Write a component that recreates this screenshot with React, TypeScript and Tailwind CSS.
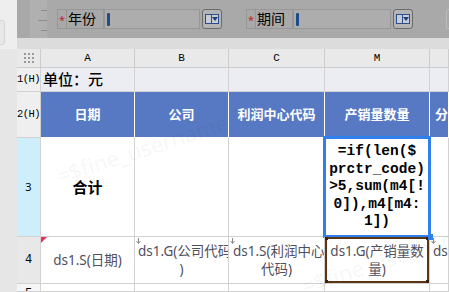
import React from 'react';

const serif = { fontFamily: '"Liberation Mono", "DejaVu Sans Mono", monospace' };
const cjk = { fontFamily: '"Noto Sans", "Noto Sans CJK SC", sans-serif' };

const DropButton: React.FC = () => (
  <div className="w-[20px] h-[20px] ml-[2px] rounded-[3px] border border-[#6b6b6b] bg-[#b4b4b4] flex items-center justify-center">
    <div className="w-[14px] h-[10px] border border-[#2c4f8c] bg-[#c8ccd6] flex">
      <div className="w-1/2 border-r border-[#2c4f8c]" />
      <div className="w-1/2 flex items-center justify-center">
        <div className="w-0 h-0 border-l-[3px] border-r-[3px] border-t-[4px] border-l-transparent border-r-transparent border-t-[#1d3f7a]" />
      </div>
    </div>
  </div>
);

const Field: React.FC<{ label: string; width: number }> = ({ label, width }) => (
  <div className="flex items-center h-[20px] shrink-0" style={cjk}>
    <div className="w-[10px] h-full border border-[#979797] flex items-center justify-center text-[#c0272d] text-[11px] leading-none">*</div>
    <div className="w-[37px] h-full border-y border-r border-[#979797] flex items-center text-[14px] text-black leading-none pl-[1px]">{label}</div>
    <div className="h-full border border-[#979797] bg-[#adadad] flex items-center pl-[2px]" style={{ width }}>
      <div className="w-[3px] h-[13px] rounded-[1px] bg-[#1f4c88]" />
    </div>
    <DropButton />
  </div>
);

const Arrow: React.FC = () => (
  <svg width="5" height="6" viewBox="0 0 5 6" className="absolute left-[1px] top-[1px]">
    <path d="M2.5 0 V5 M0.5 3 L2.5 5.5 L4.5 3" stroke="#8a8a8a" strokeWidth="1" fill="none" />
  </svg>
);

const line = 'border-r border-b border-[#d2d2d2] min-h-0 min-w-0';
const head = 'border-r border-b border-[#cdcdcd] bg-[#e9e9e9] flex items-center justify-center text-[11px] text-black';
const rowHead = `${line} flex items-center justify-center text-[10.5px] tracking-[-0.6px] text-black whitespace-nowrap`;
const blue = 'border-r border-b border-white bg-[#5779c3] flex items-center justify-center text-white text-[13px] font-bold';
const data = `${line} relative overflow-hidden text-[13.5px] leading-[18px] text-[#4f4f5e] text-center whitespace-nowrap flex flex-col justify-center`;

export default function App() {
  return (
    <div className="w-[449px] h-[292px] flex overflow-hidden bg-white">
      <div className="w-[17px] shrink-0 h-full bg-[#e6e6e6] flex flex-col">
        <div className="h-[49px] bg-[#eeeeee] relative">
          <div className="absolute left-[-4px] top-[20px] w-[9px] h-[25px] rounded-[3px] border border-[#d4d4d4] bg-[#e8e8e8]" />
        </div>
      </div>

      <div className="flex-1 min-w-0 h-full flex flex-col relative overflow-hidden">
        <div className="h-[38px] shrink-0 bg-[#a9a9a9] flex items-center">
          <div className="ml-[13px] w-[17px] shrink-0 h-full bg-[#b0b0b0] flex flex-col items-end pt-[10px] gap-[9px]">
            <div className="w-[6px] h-px bg-[#8c8c8c]" />
            <div className="w-[9px] h-px bg-[#8c8c8c]" />
            <div className="w-[6px] h-px bg-[#8c8c8c]" />
          </div>
          <div className="ml-[10px] shrink-0">
            <Field label="年份" width={96} />
          </div>
          <div className="ml-[24px] shrink-0">
            <Field label="期间" width={98} />
          </div>
          <div className="ml-[33px] shrink-0 w-[10px] h-[20px] border border-[#bcbcbc] rounded-[2px]" />
        </div>
        <div className="h-[11px] shrink-0 bg-[#dcdcdc]" />

        <div className="flex-1 min-h-0 overflow-hidden grid grid-cols-[24px_94px_94px_96px_105px_1fr] grid-rows-[19px_24px_46px_99px_47px_minmax(0,1fr)]">
          {/* column header */}
          <div className={head}>
            <div className="grid grid-cols-3 gap-[2px]">
              {Array.from({ length: 9 }).map((_, i) => (
                <div key={i} className="w-[2px] h-[2px] bg-[#9a9a9a]" />
              ))}
            </div>
          </div>
          <div className={head} style={serif}>A</div>
          <div className={head} style={serif}>B</div>
          <div className={head} style={serif}>C</div>
          <div className={`${head} bg-[#cdeefa]`} style={serif}>M</div>
          <div className={head} />

          {/* row 1 */}
          <div className={`${rowHead} bg-[#efefef]`} style={serif}>1(H)</div>
          <div className={`${line} bg-[#ebedf3] flex items-center pl-[2px] text-[15px] font-medium text-black whitespace-nowrap`} style={cjk}>单位：元</div>
          <div className={`${line} bg-[#ebedf3]`} />
          <div className={`${line} bg-[#ebedf3]`} />
          <div className={`${line} bg-[#ebedf3]`} />
          <div className={`${line} bg-[#ebedf3]`} />

          {/* row 2 */}
          <div className={`${rowHead} bg-[#efefef]`} style={serif}>2(H)</div>
          <div className={blue} style={cjk}>日期</div>
          <div className={blue} style={cjk}>公司</div>
          <div className={blue} style={cjk}>利润中心代码</div>
          <div className={blue} style={cjk}>产销量数量</div>
          <div className={`${blue} justify-start pl-[5px] overflow-hidden whitespace-nowrap`} style={cjk}>分组</div>

          {/* row 3 */}
          <div className={`${line} bg-[#cdeefa] flex items-center justify-center text-[11px] text-black`} style={cjk}>3</div>
          <div className={`${line} flex items-center justify-center text-[15px] font-bold text-black`} style={cjk}>合计</div>
          <div className={line} />
          <div className={line} />
          <div className={`${line} relative flex flex-col items-center justify-center text-[14.5px] leading-[17.5px] font-bold text-black`} style={{ fontFamily: '"Liberation Mono", "Noto Sans CJK SC", monospace' }}>
            <div>=if(len($</div>
            <div>prctr_code)</div>
            <div>&gt;5,sum(m4[!</div>
            <div>0]),m4[m4:</div>
            <div>1])</div>
            <div className="absolute left-[-2px] top-[-2px] right-[-2px] bottom-[-2px] border-[3px] border-[#2f80ed]" />
            <div className="absolute right-[-4px] bottom-[-4px] w-[5px] h-[6px] bg-[#2f80ed] z-10" />
          </div>
          <div className={line} />

          {/* row 4 */}
          <div className={`${line} bg-[#e8e8e8] flex items-center justify-center text-[12px] text-black`} style={serif}>4</div>
          <div className={data} style={cjk}>
            <svg width="6" height="6" viewBox="0 0 6 6" className="absolute left-0 top-0">
              <path d="M0 0 H6 L0 6 Z" fill="#e8345c" />
            </svg>
            <div>ds1.S(日期)</div>
          </div>
          <div className={`${data} text-left pl-[3px]`} style={cjk}>
            <Arrow />
            <div>ds1.G(公司代码</div>
            <div className="text-center pr-[3px]">)</div>
          </div>
          <div className={`${data} text-left pl-[4px]`} style={cjk}>
            <Arrow />
            <div>ds1.S(利润中心</div>
            <div className="text-center pr-[4px]">代码)</div>
          </div>
          <div className={data} style={cjk}>
            <div className="absolute inset-0 border-2 border-[#5a3614]" />
            <div className="absolute left-0 top-0 w-[3px] h-[3px] bg-[#3a2208]" />
            <div className="absolute right-0 top-0 w-[3px] h-[3px] bg-[#3a2208]" />
            <div className="absolute left-0 bottom-0 w-[3px] h-[3px] bg-[#3a2208]" />
            <div className="absolute right-0 bottom-0 w-[3px] h-[3px] bg-[#3a2208]" />
            <div>ds1.G(产销量数</div>
            <div>量)</div>
          </div>
          <div className={`${data} text-left pl-[3px]`} style={cjk}>
            <Arrow />
            <div>ds1.G</div>
            <div>&nbsp;</div>
          </div>

          {/* row 5 */}
          <div className={`${line} bg-[#f5f5f5] overflow-hidden flex items-start justify-center text-[12px] leading-[14px] pt-[3px] text-black`} style={serif}>5</div>
          <div className={line} />
          <div className={line} />
          <div className={line} />
          <div className={line} />
          <div className={line} />
        </div>

        {/* watermark */}
        <div className="absolute left-[40px] top-[160px] text-[22px] text-black/[0.05] whitespace-nowrap pointer-events-none -rotate-[18deg] origin-left" style={cjk}>=$fine_username</div>
        <div className="absolute left-[285px] top-[270px] text-[22px] text-black/[0.05] whitespace-nowrap pointer-events-none -rotate-[18deg] origin-left" style={cjk}>=$fine_username</div>
      </div>
    </div>
  );
}
